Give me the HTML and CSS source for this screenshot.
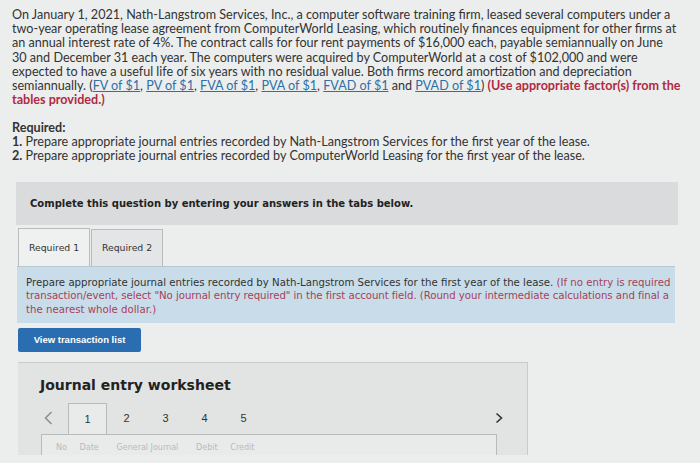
FILE: index.html
```html
<!DOCTYPE html>
<html>
<head>
<meta charset="utf-8">
<link rel="stylesheet" href="styles.css">
</head>
<body>
<div class="page">
  <div class="intro">
    <div class="line">On January 1, 2021, Nath-Langstrom Services, Inc., a computer software training firm, leased several computers under a</div>
    <div class="line">two-year operating lease agreement from ComputerWorld Leasing, which routinely finances equipment for other firms at</div>
    <div class="line">an annual interest rate of 4%. The contract calls for four rent payments of $16,000 each, payable semiannually on June</div>
    <div class="line">30 and December 31 each year. The computers were acquired by ComputerWorld at a cost of $102,000 and were</div>
    <div class="line">expected to have a useful life of six years with no residual value. Both firms record amortization and depreciation</div>
    <div class="line">semiannually. (<a class="lnk">FV of $1</a>, <a class="lnk">PV of $1</a>, <a class="lnk">FVA of $1</a>, <a class="lnk">PVA of $1</a>, <a class="lnk">FVAD of $1</a> and <a class="lnk">PVAD of $1</a>) <b class="warn">(Use appropriate factor(s) from the</b></div>
    <div class="line"><b class="warn">tables provided.)</b></div>
  </div>

  <div class="required">
    <div class="line"><b>Required:</b></div>
    <div class="line"><b>1.</b> Prepare appropriate journal entries recorded by Nath-Langstrom Services for the first year of the lease.</div>
    <div class="line"><b>2.</b> Prepare appropriate journal entries recorded by ComputerWorld Leasing for the first year of the lease.</div>
  </div>

  <div class="complete-box">Complete this question by entering your answers in the tabs below.</div>

  <div class="tabs">
    <div class="tab active">Required 1</div>
    <div class="tab">Required 2</div>
  </div>

  <div class="instr">
    <div class="line">Prepare appropriate journal entries recorded by Nath-Langstrom Services for the first year of the lease. <span class="red">(If no entry is required</span></div>
    <div class="line red tight">transaction/event, select "No journal entry required" in the first account field. (Round your intermediate calculations and final a</div>
    <div class="line red">the nearest whole dollar.)</div>
  </div>

  <div class="btn">View transaction list</div>

  <div class="worksheet">
    <div class="ws-title">Journal entry worksheet</div>
    <div class="ws-nav">
      <span class="arrow">
        <svg width="9" height="14" viewBox="0 0 9 14"><path d="M7.5 1 L1.5 7 L7.5 13" fill="none" stroke="#8a8c8e" stroke-width="1.5"/></svg>
      </span>
      <span class="num active">1</span>
      <span class="num">2</span>
      <span class="num">3</span>
      <span class="num">4</span>
      <span class="num">5</span>
      <span class="spacer"></span>
      <span class="arrow next">
        <svg width="8" height="12" viewBox="0 0 8 12"><path d="M1.5 1.5 L6.5 6 L1.5 10.5" fill="none" stroke="#333" stroke-width="1.6"/></svg>
      </span>
    </div>
    <div class="ws-body">
      <div class="ws-head">No &nbsp; &nbsp; Date &nbsp; &nbsp; &nbsp; General Journal &nbsp; &nbsp; &nbsp; Debit &nbsp; &nbsp; Credit</div>
    </div>
  </div>
</div>
</body>
</html>
```
FILE: styles.css
```css
html, body {
  margin: 0;
  padding: 0;
}
body {
  background: #eceeee;
  color: #333;
  font-family: Lato, "Liberation Sans", sans-serif;
  width: 700px;
  height: 463px;
  overflow: hidden;
}
.page {
  width: 700px;
  height: 463px;
  overflow: hidden;
}
.line {
  white-space: nowrap;
}
.intro {
  padding: 8px 0 0 12px;
  font-size: 12.6px;
  line-height: 14.2px;
}
.lnk {
  color: #2f6ea6;
  text-decoration: underline;
}
.warn {
  color: #b02a42;
}
.required {
  padding: 14px 0 0 12px;
  font-size: 12.6px;
  line-height: 13.8px;
}
.complete-box {
  margin: 19px 22px 0 16px;
  height: 43px;
  background: #d9dbdc;
  display: flex;
  align-items: center;
  padding-left: 14px;
  font-family: "DejaVu Sans", sans-serif;
  font-weight: bold;
  font-size: 10px;
  color: #222;
}
.tabs {
  display: flex;
  margin: 3px 0 0 18px;
  height: 38px;
  align-items: flex-end;
}
.tab {
  box-sizing: border-box;
  width: 72px;
  height: 37px;
  border: 1px solid #b9bbbc;
  border-bottom: none;
  background: #e4e5e6;
  display: flex;
  align-items: center;
  justify-content: center;
  font-family: "DejaVu Sans", sans-serif;
  font-size: 9.3px;
  color: #333;
  margin-right: 1px;
}
.tab.active {
  height: 38px;
  background: #eff0f0;
}
.instr {
  margin: 0 25px 0 17px;
  background: #c8dde9;
  border-top: 1px solid #b9c7d0;
  padding: 9px 0 0 9px;
  height: 47px;
  font-family: "DejaVu Sans", sans-serif;
  font-size: 10.2px;
  line-height: 13.5px;
  color: #333;
  overflow: hidden;
}
.red {
  color: #a8405a;
}
.tight {
  letter-spacing: -0.06px;
}
.btn {
  margin: 5px 0 0 18px;
  width: 123px;
  height: 24px;
  background: #2b6db1;
  border-radius: 2px;
  color: #fff;
  font-family: "Liberation Sans", Arial, sans-serif;
  font-weight: bold;
  font-size: 9.5px;
  display: flex;
  align-items: center;
  justify-content: center;
}
.worksheet {
  margin: 10px 0 0 18px;
  width: 510px;
  height: 93px;
  background: #e2e4e4;
  border-top: 1px solid #c9cbcb;
  border-right: 1px solid #c9cbcb;
  box-sizing: border-box;
  overflow: hidden;
}
.ws-title {
  padding: 14px 0 0 22px;
  font-family: "DejaVu Sans", sans-serif;
  font-weight: bold;
  font-size: 14px;
  line-height: 17px;
  color: #222;
}
.ws-nav {
  display: flex;
  align-items: stretch;
  margin: 9px 0 0 0;
  height: 31px;
}
.arrow {
  display: flex;
  align-items: center;
  width: 50px;
  padding-left: 26px;
  box-sizing: border-box;
}
.num {
  width: 39px;
  display: flex;
  align-items: center;
  justify-content: center;
  font-family: "Liberation Sans", Arial, sans-serif;
  font-size: 11px;
  color: #333;
  box-sizing: border-box;
}
.num.active {
  background: #e9ebeb;
  border: 1px solid #b9bbbb;
  border-bottom: none;
}
.spacer {
  flex: 1;
}
.arrow.next {
  width: 32px;
  padding-left: 0;
}
.ws-body {
  margin: 0 0 0 23px;
  width: 456px;
  height: 40px;
  background: #e9ebeb;
  border-left: 1px solid #b9bbbb;
  border-top: 1px solid #b9bbbb;
  border-right: 1px solid #b9bbbb;
  box-sizing: border-box;
  padding: 8px 0 0 14px;
}
.ws-head {
  font-family: "DejaVu Sans", sans-serif;
  font-size: 8px;
  color: #b8baba;
  white-space: nowrap;
}
```
